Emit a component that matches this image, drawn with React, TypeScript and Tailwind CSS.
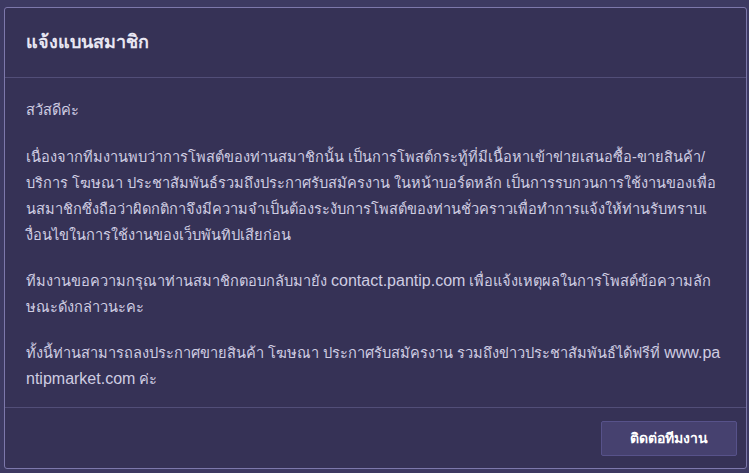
import React from "react";

const L = ({ children }: { children: React.ReactNode }) => (
  <span className="text-[16px]" style={{ fontFamily: "'Liberation Sans', Arial, sans-serif" }}>
    {children}
  </span>
);

const para1: React.ReactNode[] = [
  "เนื่องจากทีมงานพบว่าการโพสต์ของท่านสมาชิกนั้น เป็นการโพสต์กระทู้ที่มีเนื้อหาเข้าข่ายเสนอซื้อ-ขายสินค้า/",
  "บริการ โฆษณา ประชาสัมพันธ์รวมถึงประกาศรับสมัครงาน ในหน้าบอร์ดหลัก เป็นการรบกวนการใช้งานของเพื่อ",
  "นสมาชิกซึ่งถือว่าผิดกติกาจึงมีความจำเป็นต้องระงับการโพสต์ของท่านชั่วคราวเพื่อทำการแจ้งให้ท่านรับทราบเ",
  "งื่อนไขในการใช้งานของเว็บพันทิปเสียก่อน",
];
const para2: React.ReactNode[] = [
  <>
    ทีมงานขอความกรุณาท่านสมาชิกตอบกลับมายัง <L>contact.pantip.com</L> เพื่อแจ้งเหตุผลในการโพสต์ข้อความลัก
  </>,
  "ษณะดังกล่าวนะคะ",
];
const para3: React.ReactNode[] = [
  <>
    ทั้งนี้ท่านสามารถลงประกาศขายสินค้า โฆษณา ประกาศรับสมัครงาน รวมถึงข่าวประชาสัมพันธ์ได้ฟรีที่ <L>www.pa</L>
  </>,
  <>
    <L>ntipmarket.com</L> ค่ะ
  </>,
];

function Para({ lines, mb }: { lines: React.ReactNode[]; mb: string }) {
  return (
    <div className={mb}>
      {lines.map((l, i) => (
        <div key={i} className="whitespace-nowrap h-[26px]">
          {l}
        </div>
      ))}
    </div>
  );
}

export default function App() {
  return (
    <div
      className="w-[749px] h-[473px] bg-[#3d3a62] pt-[7px] pl-[4px] overflow-hidden"
      style={{ fontFamily: "Tahoma, 'Liberation Sans', 'Noto Sans', sans-serif" }}
    >
      <div className="w-[743px] h-[462px] bg-[#363256] border border-[#7d78ab] rounded-[3px] flex flex-col">
        <div className="h-[70px] border-b border-[#524e78] flex items-center pl-[21px]">
          <span className="text-[18px] text-[#e8e6f2] font-semibold">แจ้งแบนสมาชิก</span>
        </div>
        <div className="flex-1 pl-[21px] pt-[19px] text-[14.6px] leading-[26px] text-[#cfcde2]">
          <Para lines={["สวัสดีค่ะ"]} mb="mb-[21px]" />
          <Para lines={para1} mb="mb-[20px]" />
          <Para lines={para2} mb="mb-[20px]" />
          <Para lines={para3} mb="" />
        </div>
        <div className="h-[61px] border-t border-[#524e78] flex items-center justify-end pr-[9px]">
          <button className="w-[136px] h-[35px] bg-[#46416f] border border-[#57528a] rounded-[2px] text-white text-[14px] font-bold">
            ติดต่อทีมงาน
          </button>
        </div>
      </div>
    </div>
  );
}
